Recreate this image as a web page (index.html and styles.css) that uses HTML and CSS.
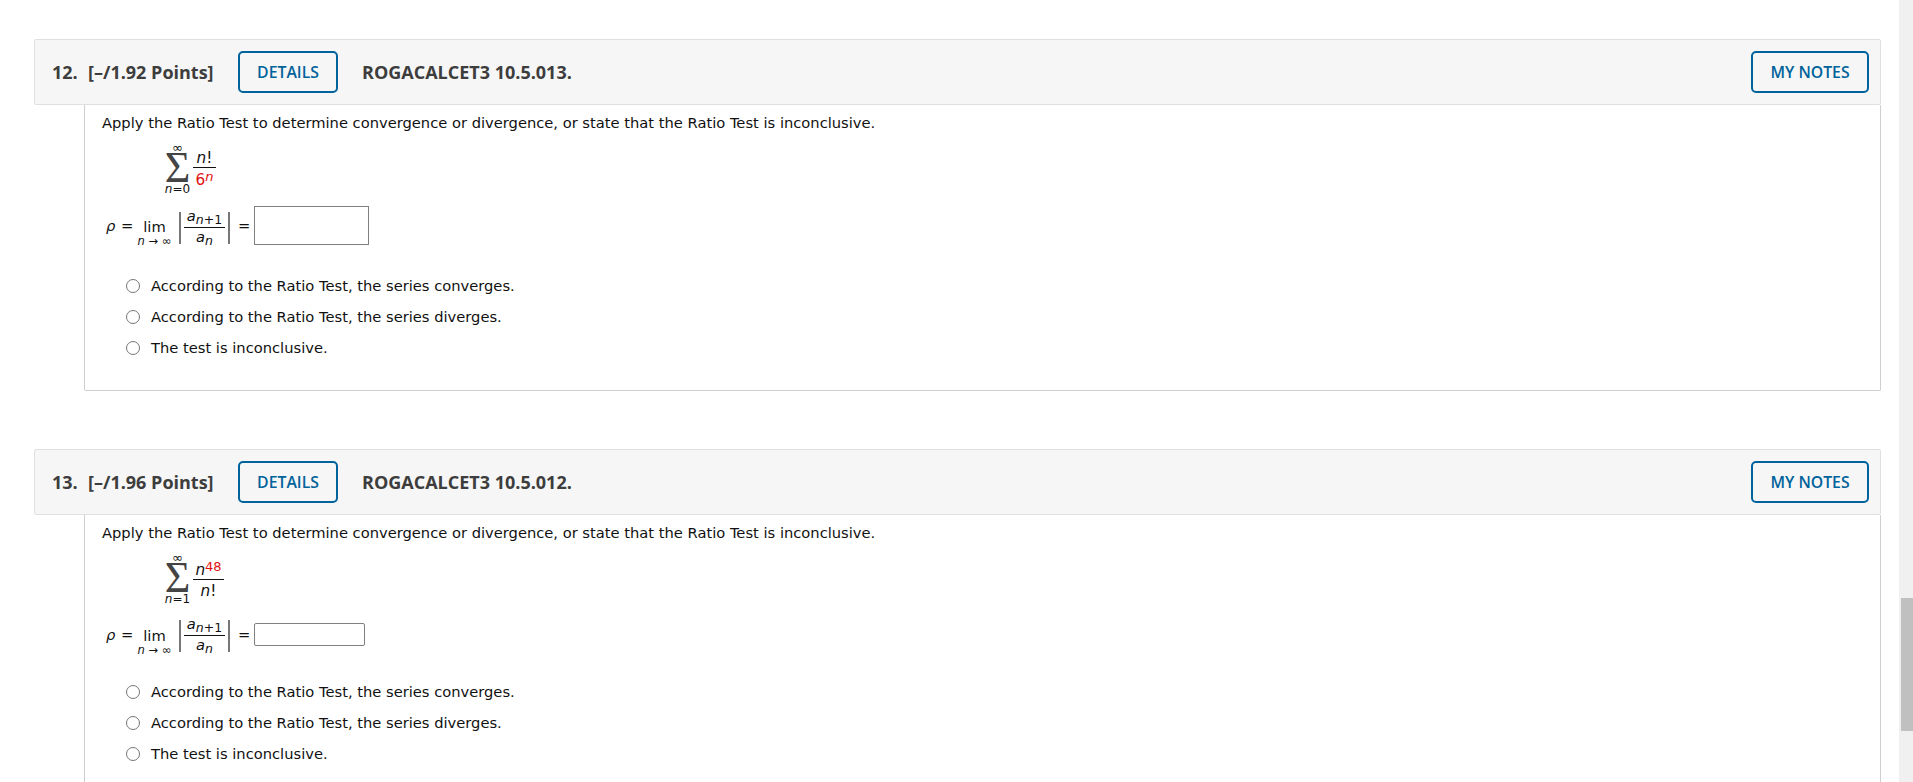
FILE: index.html
```html
<!DOCTYPE html>
<html lang="en">
<head>
<meta charset="utf-8">
<title>Ratio Test</title>
<link rel="stylesheet" href="styles.css">
</head>
<body>
<div class="page">
  <main class="content">
    <section class="question q12">
      <header class="qhead">
        <span class="qnum">12.</span>
        <span class="points">[–/1.92 Points]</span>
        <button class="btn details">DETAILS</button>
        <span class="code">ROGACALCET3 10.5.013.</span>
        <button class="btn notes">MY NOTES</button>
      </header>
      <div class="qbody">
        <p class="prompt">Apply the Ratio Test to determine convergence or divergence, or state that the Ratio Test is inconclusive.</p>
        <div class="series">
          <div class="sum"><span class="lim-top">∞</span><span class="sigma">Σ</span><span class="lim-bot"><i>n</i>=0</span></div>
          <div class="frac small"><span class="num"><i>n</i>!</span><span class="den red">6<sup><i>n</i></sup></span></div>
        </div>
        <div class="rho">
          <i class="rho-sym">ρ</i><span class="eq">=</span>
          <div class="lim"><span>lim</span><small><i>n</i> → ∞</small></div>
          <div class="abs"><div class="frac wide"><span class="num"><i>a</i><sub><i>n</i>+1</sub></span><span class="den"><i>a</i><sub><i>n</i></sub></span></div></div>
          <span class="eq2">=</span>
          <input class="answer tall" type="text" aria-label="answer">
        </div>
        <ul class="options">
          <li><span class="radio"></span>According to the Ratio Test, the series converges.</li>
          <li><span class="radio"></span>According to the Ratio Test, the series diverges.</li>
          <li><span class="radio"></span>The test is inconclusive.</li>
        </ul>
      </div>
    </section>
    <section class="question q13">
      <header class="qhead">
        <span class="qnum">13.</span>
        <span class="points">[–/1.96 Points]</span>
        <button class="btn details">DETAILS</button>
        <span class="code">ROGACALCET3 10.5.012.</span>
        <button class="btn notes">MY NOTES</button>
      </header>
      <div class="qbody">
        <p class="prompt">Apply the Ratio Test to determine convergence or divergence, or state that the Ratio Test is inconclusive.</p>
        <div class="series">
          <div class="sum"><span class="lim-top">∞</span><span class="sigma">Σ</span><span class="lim-bot"><i>n</i>=1</span></div>
          <div class="frac big"><span class="num"><i>n</i><sup class="red">48</sup></span><span class="den"><i>n</i>!</span></div>
        </div>
        <div class="rho short">
          <i class="rho-sym">ρ</i><span class="eq">=</span>
          <div class="lim"><span>lim</span><small><i>n</i> → ∞</small></div>
          <div class="abs"><div class="frac wide"><span class="num"><i>a</i><sub><i>n</i>+1</sub></span><span class="den"><i>a</i><sub><i>n</i></sub></span></div></div>
          <span class="eq2">=</span>
          <input class="answer flat" type="text" aria-label="answer">
        </div>
        <ul class="options">
          <li><span class="radio"></span>According to the Ratio Test, the series converges.</li>
          <li><span class="radio"></span>According to the Ratio Test, the series diverges.</li>
          <li><span class="radio"></span>The test is inconclusive.</li>
        </ul>
      </div>
    </section>
  </main>
  <div class="scrollbar"><div class="thumb"></div></div>
</div>
</body>
</html>
```
FILE: styles.css
```css
* { box-sizing: border-box; }
html, body { margin: 0; height: 100%; overflow: hidden; background: #fff; }
.page { display: flex; height: 782px; }
.content { flex: 1; min-width: 0; height: 782px; overflow: hidden; padding: 39px 18px 0 34px; }
.scrollbar { width: 14px; background: #f0f0f0; padding: 598px 0 0 2px; }
.thumb { height: 133px; background: #c0c0c0; }

.question { margin-bottom: 58px; }
.qhead {
  display: flex; align-items: center; height: 66px;
  padding: 0 11px 0 17px;
  background: #f6f6f6; border: 1px solid #e0e0e0; border-radius: 2px;
  font-family: "Open Sans", sans-serif; font-weight: 700; font-size: 18px; color: #3d3d3d;
}
.qnum { width: 36px; }
.points { width: 150px; }
.code { margin-left: 24px; }
.btn {
  height: 42px; border: 2px solid #00639c; border-radius: 5px; background: #fff0;
  color: #00639c; font-family: "Open Sans", sans-serif; font-weight: 600; font-size: 15.8px; padding: 0;
}
.details { width: 100px; }
.notes { width: 118px; margin-left: auto; }

.qbody {
  margin-left: 50px; padding: 0 0 0 17px; height: 286px;
  border: 1px solid #cfcfcf; border-top: 0; border-radius: 0 0 2px 2px;
  font-family: "DejaVu Sans", sans-serif; font-size: 14.7px; color: #111;
}
.q13 .qbody { height: 300px; }
.prompt { margin: 0; padding-top: 7px; line-height: 22px; }

.series { display: flex; align-items: flex-start; padding-left: 60px; margin-top: 8px; height: 57px; }
.sum { width: 31px; display: flex; flex-direction: column; align-items: center; }
.lim-top { font-size: 13px; line-height: 10px; margin-top: 1px; }
.sigma { font-family: "Liberation Serif", serif; font-size: 44px; line-height: 29px; color: #444; }
.lim-bot { font-size: 12px; line-height: 14px; white-space: nowrap; }
.frac { display: flex; flex-direction: column; align-items: center; font-size: 15.3px; }
.frac .num { border-bottom: 1px solid #111; width: 100%; text-align: center; line-height: 24px; height: 22px; }
.frac .den { line-height: 24px; }
.frac.small { width: 23px; margin-top: 4px; }
.frac.big { width: 31px; margin-top: 6px; }
.frac.big .den { line-height: 22px; }
.frac sup { font-size: 13px; line-height: 0; vertical-align: 4px; }
.frac sub { font-size: 12.5px; line-height: 0; vertical-align: -3px; }
.red { color: #e01010; }

.rho { display: flex; align-items: center; height: 39px; margin-top: 7px; padding-left: 4px; }
.rho.short { margin-top: 6px; }
.rho-sym { width: 15px; }
.eq { width: 22px; }
.lim { width: 35px; margin-left: -6px; height: 36px; display: flex; flex-direction: column; align-items: center; }
.lim span { line-height: 18px; margin-top: 10px; font-size: 14.7px; }
.lim small { font-size: 11.5px; line-height: 11px; white-space: nowrap; }
.abs { width: 51px; height: 32px; margin: 5px 0 0 7px; border-left: 2px solid #777; border-right: 2px solid #777; display: flex; justify-content: center; align-items: flex-start; }
.short .abs { margin-top: 3px; }
.frac.wide { width: 41px; margin: 0; font-size: 14.7px; }
.frac.wide .num { height: 16px; line-height: 8px; }
.frac.wide .den { line-height: 18px; }
.eq2 { width: 24px; padding-left: 8px; }
.answer { display: block; padding: 0; background: #fff; border: 1px solid #808080; }
.tall { width: 115px; height: 39px; }
.flat { width: 111px; height: 23px; border-radius: 2px; }

.options { list-style: none; margin: 25px 0 0; padding: 0 0 0 24px; }
.short ~ .options { margin-top: 22px; }
.options li { display: flex; align-items: center; height: 31px; }
.radio { width: 14px; height: 14px; border: 1px solid #767676; border-radius: 50%; margin-right: 11px; background: #fff; }
```
